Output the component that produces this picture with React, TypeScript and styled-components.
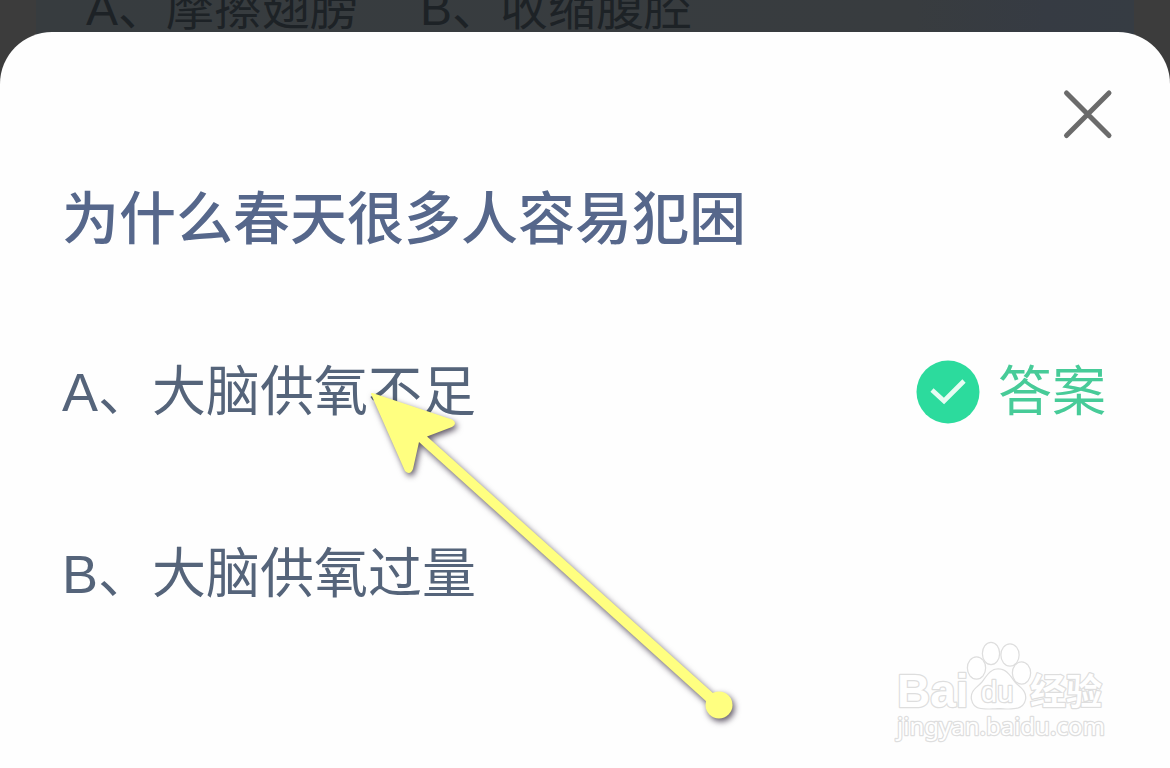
import React from "react";
import styled, { createGlobalStyle } from "styled-components";

const GlobalStyle = createGlobalStyle`
  *, *::before, *::after { box-sizing: border-box; }
  body {
    margin: 0;
    background: #3c3c3c;
    font-family: "Liberation Sans", "Noto Sans CJK SC", sans-serif;
  }
  h1, ol, p { margin: 0; padding: 0; }
`;

const Page = styled.div`
  position: relative;
  display: flex;
  flex-direction: column;
  min-height: 100vh;
  overflow: hidden;
`;

const PreviousQuestion = styled.div`
  display: flex;
  align-items: flex-end;
  gap: 62px;
  height: 84px;
  margin: 0 36px -52px;
  padding: 0 50px 43px;
  overflow: hidden;
  background: linear-gradient(90deg, #373c3f 0%, #383c3f 80%, #363b43 92%, #363c43 100%);
  color: #1d2226;
  font-size: 48px;
  line-height: 64px;
  white-space: nowrap;
`;

const Sheet = styled.main`
  position: relative;
  flex: 1;
  display: flex;
  flex-direction: column;
  border-radius: 52px 52px 0 0;
  background: #fefefe;
`;

const SheetHeader = styled.header`
  display: flex;
  justify-content: flex-end;
  padding: 56px 56px 0;
`;

const CloseButton = styled.button`
  width: 52px;
  height: 52px;
  padding: 0;
  border: 0;
  background: none;
  cursor: pointer;

  svg { display: block; }
`;

const Title = styled.h1`
  padding: 36px 62px 0;
  color: #56678b;
  font-family: "Noto Sans CJK SC", sans-serif;
  font-size: 57px;
  font-weight: 500;
  line-height: 76px;
`;

const Options = styled.ol`
  display: flex;
  flex-direction: column;
  gap: 102px;
  padding: 100px 64px 0 62px;
  list-style: none;
`;

const Option = styled.li`
  display: flex;
  align-items: center;
  justify-content: space-between;
  color: #55647a;
  font-size: 54px;
  line-height: 80px;
`;

const Answer = styled.span`
  display: flex;
  align-items: center;
  gap: 18px;
  color: #47cb98;
`;

const Footer = styled.footer`
  display: flex;
  justify-content: flex-end;
  margin-top: auto;
  padding: 24px 60px 20px 0;
`;

const Pointer = styled.svg`
  position: absolute;
  top: 380px;
  left: 360px;
  pointer-events: none;
  filter: drop-shadow(2px 3px 3px rgba(40, 30, 50, 0.75));
`;

function CheckIcon() {
  return (
    <svg width="64" height="64" viewBox="0 0 64 64" aria-hidden="true">
      <circle cx="32" cy="32" r="31.5" fill="#2cdb9d" />
      <path d="M16 30 L28 41 L48 21" fill="none" stroke="#e6fdf3" strokeWidth="4.6" />
    </svg>
  );
}

function Watermark() {
  return (
    <svg width="216" height="108" viewBox="0 0 216 108" role="img" aria-label="Baidu">
      <g fill="#ffffff" stroke="#dedede" strokeWidth="2.5" strokeLinejoin="round" paintOrder="stroke">
        <text x="3" y="67" fontFamily="Liberation Sans, sans-serif" fontWeight="700" fontSize="46">Bai</text>
        <ellipse cx="82.5" cy="28" rx="8.5" ry="10.5" />
        <ellipse cx="97" cy="13.5" rx="8" ry="10.5" />
        <ellipse cx="116" cy="15" rx="8.5" ry="10.5" />
        <ellipse cx="127.5" cy="33" rx="8.5" ry="10.5" />
        <path d="M104 29.5 C113 29.5 116 37 121 43 C126 48 132 51 131 59 C129 69 121 69 104 68 C87 69 80 69 78 59 C77 51 83 48 88 43 C93 37 96 29.5 104 29.5 Z" />
        <text x="87" y="62" fontFamily="Liberation Sans, sans-serif" fontSize="29">du</text>
        <text x="136" y="65" fontFamily="Noto Sans CJK SC, sans-serif" fontWeight="700" fontSize="36">经验</text>
        <text x="3" y="95" fontFamily="Noto Sans, sans-serif" fontSize="24">jingyan.baidu.com</text>
      </g>
    </svg>
  );
}

export default function App() {
  return (
    <Page>
      <GlobalStyle />
      <PreviousQuestion>
        <span>A、摩擦翅膀</span>
        <span>B、收缩腹腔</span>
      </PreviousQuestion>
      <Sheet>
        <SheetHeader>
          <CloseButton type="button" aria-label="关闭">
            <svg width="52" height="52" viewBox="0 0 52 52" aria-hidden="true">
              <path d="M4.5 5 L47 47.5 M47 5 L4.5 47.5" stroke="#6b6b6b" strokeWidth="5" strokeLinecap="round" />
            </svg>
          </CloseButton>
        </SheetHeader>
        <Title>为什么春天很多人容易犯困</Title>
        <Options>
          <Option>
            <span>A、大脑供氧不足</span>
            <Answer>
              <CheckIcon />
              <span>答案</span>
            </Answer>
          </Option>
          <Option>
            <span>B、大脑供氧过量</span>
          </Option>
        </Options>
        <Footer>
          <Watermark />
        </Footer>
      </Sheet>
      <Pointer width="400" height="360" viewBox="360 380 400 360" aria-hidden="true">
        <path
          d="M371 394 Q371 392.5 374 393.5 L452 419.5 Q458 423 452 427 L427 436.5 L714 694 L707 702 L419 442 L413 469 Q410 476 405 471 Z"
          fill="#ffff80"
        />
        <circle cx="719" cy="705" r="13.5" fill="#ffff80" />
      </Pointer>
    </Page>
  );
}
